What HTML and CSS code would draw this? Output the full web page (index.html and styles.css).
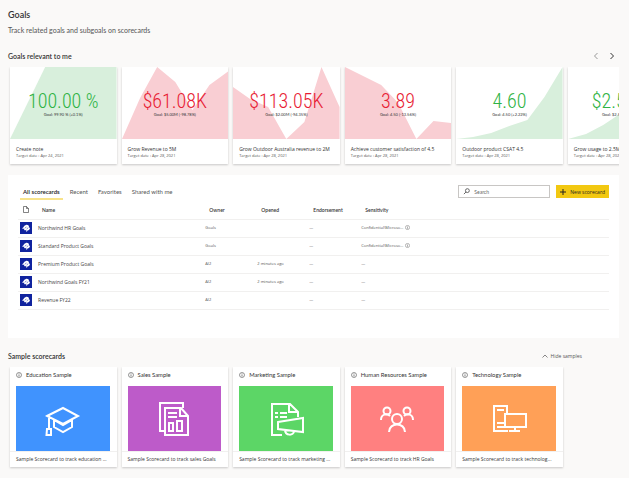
FILE: index.html
```html
<!DOCTYPE html>
<html lang="en">
<head>
<meta charset="utf-8">
<meta name="viewport" content="width=device-width, initial-scale=1">
<title>Goals</title>
<link rel="stylesheet" href="styles.css">
</head>
<body>
<svg class="sprite" aria-hidden="true">
  <symbol id="info" viewBox="0 0 12 12"><circle cx="6" cy="6" r="5" fill="none" stroke="currentColor"/><path d="M6 5v4M6 3v1.2" stroke="currentColor" stroke-width="1.2"/></symbol>
  <symbol id="trophy" viewBox="0 0 24 24"><path fill="#fff" d="M5 12c2-1 3-5 7-6 3-1 6 1 6 4l2 3-2 3-3 1-1 2h-2l1-4-3 2-2-2 1-2-4 1z"/><path d="M10 12l3-2M14 14l2-3" stroke="#10239e"/></symbol>
</svg>
<main class="page">
  <header class="intro">
    <h1>Goals</h1>
    <p>Track related goals and subgoals on scorecards</p>
  </header>

  <section>
    <div class="section-head">
      <h2>Goals relevant to me</h2>
      <div class="pager">
        <button type="button" class="prev" aria-label="Previous"><svg viewBox="0 0 6 8"><path d="M4.500 1L1.500 4l3 3"/></svg></button>
        <button type="button" aria-label="Next"><svg viewBox="0 0 6 8"><path d="M1.500 1l3 3-3 3"/></svg></button>
      </div>
    </div>
    <div class="cards goals">
      <article class="card good">
        <div class="chart"><svg viewBox="0 0 106 72" preserveAspectRatio="none"><path d="M0 72L35 0H106V72z"/></svg><strong>100.00 %</strong><span>Goal: 99.90 % (+0.1%)</span></div>
        <h3>Create note</h3><p>Target date : Apr 24, 2021</p>
      </article>
      <article class="card bad">
        <div class="chart"><svg viewBox="0 0 106 72" preserveAspectRatio="none"><path d="M0 72L18 31L35 0L53 15L70 43L87 18L106 4V72z"/></svg><strong>$61.08K</strong><span>Goal: $5.00M (-98.78%)</span></div>
        <h3>Grow Revenue to 5M</h3><p>Target date : Apr 28, 2021</p>
      </article>
      <article class="card bad">
        <div class="chart"><svg viewBox="0 0 106 72" preserveAspectRatio="none"><path d="M0 72V20L17 32L35 40L53 72L71 55L88 0L106 40V72z"/></svg><strong>$113.05K</strong><span>Goal: $2.00M (-94.35%)</span></div>
        <h3>Grow Outdoor Australia revenue to 2M</h3><p>Target date : Apr 28, 2021</p>
      </article>
      <article class="card bad">
        <div class="chart"><svg viewBox="0 0 106 72" preserveAspectRatio="none"><path d="M0 72V0L36 18L53 36L71 72L88 54L106 56V72z"/></svg><strong>3.89</strong><span>Goal: 4.50 (-13.56%)</span></div>
        <h3>Achieve customer satisfaction of 4.5</h3><p>Target date : Apr 28, 2021</p>
      </article>
      <article class="card good">
        <div class="chart"><svg viewBox="0 0 106 72" preserveAspectRatio="none"><path d="M0 72L17 70L35 66L53 59L71 53L88 30L106 0V72z"/></svg><strong>4.60</strong><span>Goal: 4.50 (+2.22%)</span></div>
        <h3>Outdoor product CSAT 4.5</h3><p>Target date : Apr 28, 2021</p>
      </article>
      <article class="card good">
        <div class="chart"><svg viewBox="0 0 106 72" preserveAspectRatio="none"><path d="M0 72L18 67L35 58L50 48L71 32L106 0V72z"/></svg><strong>$2.57M</strong><span>Goal: $2.50M (+2.8%)</span></div>
        <h3>Grow usage to 2.5M</h3><p>Target date : Apr 28, 2021</p>
      </article>
    </div>
  </section>

  <section class="panel">
    <div class="toolbar">
      <nav class="tabs">
        <a href="#" class="active" aria-current="page">All scorecards</a>
        <a href="#">Recent</a>
        <a href="#">Favorites</a>
        <a href="#">Shared with me</a>
      </nav>
      <div class="actions">
        <label class="search">
          <svg viewBox="0 0 8 8"><circle cx="5" cy="3" r="2.200"/><path d="M3.400 4.600L1 7"/></svg>
          <input type="search" placeholder="Search" aria-label="Search">
        </label>
        <button type="button" class="new"><svg viewBox="0 0 6 6"><path d="M3 0v6M0 3h6"/></svg>New scorecard</button>
      </div>
    </div>
    <table>
      <colgroup><col class="c-icon"><col class="c-name"><col class="c-mid"><col class="c-mid"><col class="c-mid"><col></colgroup>
      <thead>
        <tr><th><svg class="file" viewBox="0 0 6 7"><path d="M.5.5h3l2 2v4h-5zM3.500.5v2h2"/></svg></th><th>Name</th><th>Owner</th><th>Opened</th><th>Endorsement</th><th>Sensitivity</th></tr>
      </thead>
      <tbody>
        <tr><td><svg class="badge"><use href="#trophy"/></svg></td><td>Northwind HR Goals</td><td>Goals</td><td></td><td>—</td><td>Confidential\Microso... <svg class="info"><use href="#info"/></svg></td></tr>
        <tr><td><svg class="badge"><use href="#trophy"/></svg></td><td>Standard Product Goals</td><td>Goals</td><td></td><td>—</td><td>Confidential\Microso... <svg class="info"><use href="#info"/></svg></td></tr>
        <tr><td><svg class="badge"><use href="#trophy"/></svg></td><td>Premium Product Goals</td><td>AI2</td><td>2 minutes ago</td><td>—</td><td>—</td></tr>
        <tr><td><svg class="badge"><use href="#trophy"/></svg></td><td>Northwind Goals FY21</td><td>AI2</td><td>2 minutes ago</td><td>—</td><td>—</td></tr>
        <tr><td><svg class="badge"><use href="#trophy"/></svg></td><td>Revenue FY22</td><td>AI2</td><td></td><td>—</td><td>—</td></tr>
      </tbody>
    </table>
  </section>

  <section>
    <div class="section-head samples-head">
      <h2>Sample scorecards</h2>
      <button type="button" class="hide"><svg viewBox="0 0 6 4"><path d="M.5 3.500L3 1l2.500 2.500"/></svg>Hide samples</button>
    </div>
    <div class="cards samples">
      <article class="card">
        <h3><svg class="info"><use href="#info"/></svg>Education Sample</h3>
        <div class="art blue"><svg viewBox="0 0 36 36"><path d="M2 15L18 7l15 8-15 8zM9 19v7l9 5 9-5v-7M9 19l9 5 9-5M4 15v12M2 28h4v6H1.500z"/></svg></div>
        <p>Sample Scorecard to track education ...</p>
      </article>
      <article class="card">
        <h3><svg class="info"><use href="#info"/></svg>Sales Sample</h3>
        <div class="art purple"><svg viewBox="0 0 36 36"><path d="M8 30H4V2h23v5M9 7h16l7 8v19H9zM24 7v8h8M12 12h9M12 16h9M13 22h4v8h-4zM21 20h5v10h-5z"/></svg></div>
        <p>Sample Scorecard to track sales Goals</p>
      </article>
      <article class="card">
        <h3><svg class="info"><use href="#info"/></svg>Marketing Sample</h3>
        <div class="art green"><svg viewBox="0 0 36 36"><path d="M14 34H4V3h18l8 8v5M21 3v8h8M7 12h3M7 16h3M12 12h7M12 16h7M10 21l25-4v14l-25-3zM17 29c0 6 9 6 9 1"/></svg></div>
        <p>Sample Scorecard to track marketing ...</p>
      </article>
      <article class="card">
        <h3><svg class="info"><use href="#info"/></svg>Human Resources Sample</h3>
        <div class="art coral"><svg viewBox="0 0 36 36"><circle cx="18" cy="18" r="5"/><circle cx="8" cy="10" r="3.500"/><circle cx="28" cy="10" r="3.500"/><path d="M10 31c0-10 16-10 16 0M2 19c0-6 6-7 9-4M34 19c0-6-6-7-9-4"/></svg></div>
        <p>Sample Scorecard to track HR Goals</p>
      </article>
      <article class="card">
        <h3><svg class="info"><use href="#info"/></svg>Technology Sample</h3>
        <div class="art orange"><svg viewBox="0 0 36 36"><path d="M17 30H3V5h13v8M6 9h7M6 22h7M6 26h7M14 13h21v13H14zM24 26v4M18 30h11"/></svg></div>
        <p>Sample Scorecard to track technolog...</p>
      </article>
    </div>
  </section>
</main>
</body>
</html>
```
FILE: styles.css
```css
* { box-sizing: border-box; }
body {
  margin: 0;
  background: #faf9f8;
  color: #333;
  font: 5px/8px Lato, "Open Sans", sans-serif;
}
h1, h2, h3, p { margin: 0; font-weight: 400; }
button { border: 0; padding: 0; background: none; color: inherit; font: inherit; }
svg { fill: none; stroke: currentColor; display: block; }
.sprite { display: none; }
.page { padding: 8px 10px 11px 8px; }

.intro { padding-bottom: 17px; }
h1 { font-size: 9px; line-height: 14px; font-weight: 600; }
.intro p { margin-top: 4px; font-size: 7px; line-height: 9px; color: #555; }

.section-head { display: flex; align-items: center; justify-content: space-between; height: 8px; margin-bottom: 7px; }
h2 { font-size: 7px; font-weight: 600; }
.pager { display: flex; gap: 10px; padding-right: 4px; }
.pager svg { width: 6px; height: 8px; }
.prev { color: #999; }

.cards { display: grid; grid-auto-flow: column; grid-auto-columns: 17.5%; gap: 5px; padding: 0 0 3px 2px; overflow: hidden; }
.card { min-width: 0; background: #fff; box-shadow: 0 1px 2px #0003; }
.goals .card { height: 97px; }
.chart { position: relative; display: flex; flex-direction: column; align-items: center; height: 72px; padding-top: 23px; }
.chart svg { position: absolute; inset: 0; width: 100%; height: 100%; stroke: none; }
.chart strong { position: relative; font: 300 20px/22px "Roboto Condensed", Roboto, sans-serif; }
.chart span { position: relative; font-size: 4px; line-height: 6px; }
.good path { fill: #d8efdc; }
.bad path { fill: #f9ced3; }
.good strong { color: #2fb344; }
.bad strong { color: #e81c34; }
.goals h3 { padding: 6px 0 0 6px; font: 500 5px/8px "Open Sans", sans-serif; white-space: nowrap; }
.goals p { padding-left: 6px; font: 4px/5px "Open Sans", sans-serif; color: #555; white-space: nowrap; }

.panel { min-height: 163px; margin: 8px 0 14px; padding: 10px 10px 0; background: #fff; }
.toolbar { display: flex; align-items: flex-start; justify-content: space-between; }
.tabs { display: flex; gap: 10px; padding: 3px 0 0 2px; font-size: 6px; }
.tabs a { color: #555; text-decoration: none; padding-bottom: 2px; }
.tabs .active { margin-right: -3px; padding: 0 3px 2px; color: #222; font-weight: 600; border-bottom: 2px solid #f8e38a; }
.actions { display: flex; gap: 6px; }
.search { display: flex; align-items: center; gap: 4px; width: 92px; height: 13px; padding: 0 4px; border: 1px solid #c8c6c4; }
.search svg { flex: none; width: 7px; height: 7px; color: #555; }
.search input { min-width: 0; width: 100%; border: 0; padding: 0; outline: 0; background: none; color: inherit; font: inherit; }
.search input::placeholder { color: #666; }
.new { display: flex; align-items: center; gap: 4px; height: 13px; padding: 0 4px; background: #f2c811; color: #222; font: 5px/8px "Open Sans", sans-serif; }
.new svg { width: 6px; height: 6px; }

table { width: 100%; margin-top: 1px; border-collapse: collapse; table-layout: fixed; }
.c-icon { width: 3.400%; }
.c-name { width: 28.300%; }
.c-mid { width: 8.800%; }
th, td { height: 18px; padding: 0; border-bottom: 1px solid #f1f0ef; text-align: left; white-space: nowrap; }
th { padding-left: 4px; font-size: 5px; font-weight: 600; color: #333; }
td { font: 4px/8px "Open Sans", sans-serif; color: #555; }
td:nth-child(2) { font-size: 5px; color: #444; }
.file { width: 6px; height: 7px; margin-left: 1px; stroke-width: .6px; }
.badge { width: 12px; height: 12px; margin-left: 2px; background: #10239e; stroke: none; }
td .info { display: inline-block; width: 5px; height: 5px; margin-left: 1px; vertical-align: middle; }

.samples-head { padding-right: 37px; }
.hide { display: flex; align-items: center; gap: 3px; color: #555; font-family: "Open Sans", sans-serif; }
.hide svg { width: 6px; height: 4px; stroke-width: .7px; }
.samples .card { padding-top: 3px; }
.samples h3 { display: flex; align-items: center; gap: 4px; height: 10px; padding-left: 6px; }
h3 .info { width: 6px; height: 6px; }
.art { display: grid; place-items: center; height: 65px; margin: 6px 7px 0 6px; color: #fff; }
.art svg { width: 36px; height: 36px; stroke-width: 2px; }
.blue { background: #4093fe; }
.purple { background: #bd5bc9; }
.green { background: #5cd666; }
.coral { background: #ff8080; }
.orange { background: #ffa057; }
.samples p { padding: 3px 6px 4px; border-top: 1px solid #f1f0ef; font-family: "Open Sans", sans-serif; white-space: nowrap; overflow: hidden; }
```
